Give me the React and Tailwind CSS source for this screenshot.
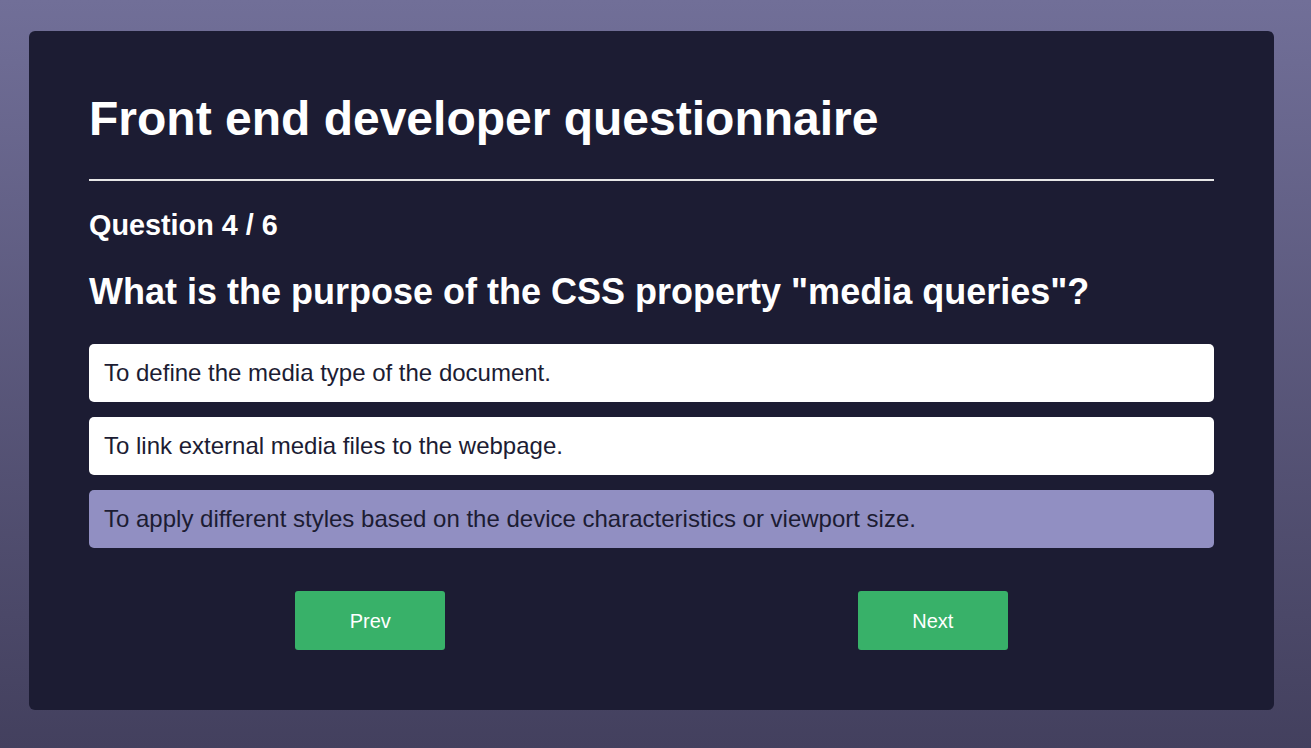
import { useState } from "react";

const options = [
  "To define the media type of the document.",
  "To link external media files to the webpage.",
  "To apply different styles based on the device characteristics or viewport size.",
];

export default function App() {
  const [selected, setSelected] = useState(2);

  return (
    <div
      className="min-h-screen w-full bg-gradient-to-b from-[#716f98] to-[#43405e] pt-[31px] pb-[38px] pl-[29px]"
      style={{ fontFamily: '"Liberation Sans", Arial, sans-serif' }}
    >
      <div className="w-[1245px] rounded-[6px] bg-[#1c1c33] px-[60px] pt-[60px] pb-[60px] text-white">
        <h1 className="text-[48px] font-bold leading-[55px]">Front end developer questionnaire</h1>
        <div className="mt-[33px] h-[2px] bg-[#e6e6e6]" />

        <h3 className="mt-[28px] text-[28.8px] font-bold leading-[33px]">Question 4 / 6</h3>
        <h2 className="mt-[29px] text-[36px] font-bold leading-[41px]">
          What is the purpose of the CSS property "media queries"?
        </h2>

        <div className="mt-[32px] flex flex-col gap-[15px]">
          {options.map((opt, i) => (
            <button
              key={i}
              onClick={() => setSelected(i)}
              className={`w-full rounded-[5px] px-[15px] py-[15px] text-left text-[24px] leading-[28px] text-[#1c1c33] ${
                selected === i ? "bg-[#918fc2]" : "bg-white"
              }`}
            >
              {opt}
            </button>
          ))}
        </div>

        <div className="mt-[43px] flex justify-around">
          <button className="h-[59px] w-[150px] rounded-[3px] bg-[#38b169] text-[20px] text-white">Prev</button>
          <button className="h-[59px] w-[150px] rounded-[3px] bg-[#38b169] text-[20px] text-white">Next</button>
        </div>
      </div>
    </div>
  );
}
